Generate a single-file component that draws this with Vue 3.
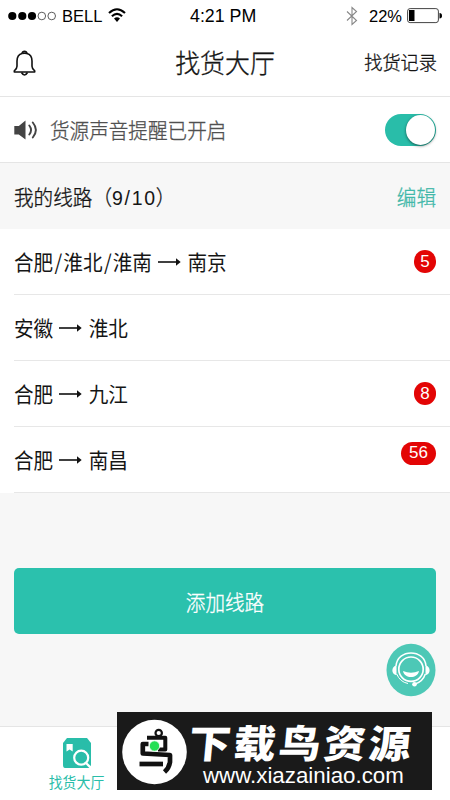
<script setup>
const routes = [
  { from: ['合肥', '淮北', '淮南'], to: '南京', count: 5 },
  { from: ['安徽'], to: '淮北', count: 0 },
  { from: ['合肥'], to: '九江', count: 8 },
  { from: ['合肥'], to: '南昌', count: 56 },
]
</script>

<template>
  <div class="screen">
    <div class="status">
      <svg class="signal" width="49" height="12" viewBox="0 0 49 12">
        <circle cx="4.3" cy="6" r="4.1" /><circle cx="14.3" cy="6" r="4.1" /><circle cx="24" cy="6" r="4.1" />
        <g fill="none" stroke="#333" stroke-width=".8"><circle cx="33.8" cy="6" r="3.8" /><circle cx="43.7" cy="6" r="3.8" /></g>
      </svg>
      <span class="carrier">BELL</span>
      <svg class="wifi" width="18" height="15" viewBox="0 0 18 15" fill="none" stroke="#000" stroke-width="2.1">
        <path d="M1 5.1Q9-2.6 17 5.1M3.9 8.3Q9 3.5 14.1 8.3" /><path d="M6 10.6Q9 8 12 10.6L9 14Z" fill="#000" stroke="none" />
      </svg>
      <span class="time">4:21 PM</span>
      <svg class="bluetooth" width="12" height="20" viewBox="0 0 12 20" fill="none" stroke="#888" stroke-width="1.1"><path d="M1 5.5 10.5 14.5 6 18.5V1.5L10.5 5.5 1 14.5" /></svg>
      <span class="percent">22%</span>
      <svg class="battery" width="35" height="16" viewBox="0 0 35 16"><rect x=".6" y=".6" width="30.8" height="14" rx="2.5" fill="none" stroke="#444" /><path d="M2 2h5.5v11H2z" /><path d="M32.5 5Q35 5 35 7.7T32.5 10.4Z" /></svg>
    </div>

    <header class="nav">
      <svg width="23" height="27" viewBox="0 0 23 27" fill="none" stroke="#111" stroke-width="1.6" stroke-linejoin="round">
        <path d="M9.1 3.4C5.2 4.4 4 7.5 4 11v5.2c0 2.1-.9 3.2-2.7 4.6V22h20.4v-1.2C19.9 19.4 19 18.3 19 16.2V11c0-3.5-1.2-6.6-5.1-7.6" />
        <path d="M9.1 3.5C9 .4 14 .4 13.9 3.5Q11.5 2.7 9.1 3.5M8.5 22.5Q11.5 27.5 14.5 22.5" />
      </svg>
      <h1 class="tall">找货大厅</h1>
      <span class="record tall">找货记录</span>
    </header>

    <section class="sound">
      <svg width="25" height="20" viewBox="0 0 25 20"><path d="M.3 6H4.8L11.5.5V19.5L4.8 14.5H.3Z" fill="#444" /><path d="M15.3 5.5Q18.8 10 15.3 14.5M18.8 2.5Q25 10 18.8 17.5" fill="none" stroke="#444" stroke-width="1.9" stroke-linecap="round" /></svg>
      <span class="sound-label tall">货源声音提醒已开启</span>
      <div class="toggle"><i></i></div>
    </section>

    <section class="heading">
      <span class="tall">我的线路<span>（</span><span class="quota">9/10</span><span class="close">）</span></span>
      <span class="edit tall">编辑</span>
    </section>

    <ul class="routes">
      <li v-for="(r, i) in routes" :key="i">
        <span class="tall"><template v-for="(city, j) in r.from" :key="city"><span v-if="j" class="slash">/</span>{{ city }}</template></span>
        <svg class="arrow" width="23" height="10" viewBox="0 0 23 10"><path d="M0 5H19" stroke="#111" stroke-width="1.6" /><path d="M18 1.2 22.7 5 18 8.8Z" fill="#111" /></svg>
        <span class="tall">{{ r.to }}</span>
        <em v-if="r.count" :class="{ wide: r.count > 9 }"><span>{{ r.count }}</span></em>
      </li>
    </ul>

    <main class="actions"><button><span class="tall">添加线路</span></button></main>

    <nav class="tabs">
      <div class="tab">
        <svg width="28" height="30" viewBox="0 0 28 30">
          <path d="M4 0H24L28 5V27Q28 30 26 30H2Q0 30 0 27V5Z" fill="#29bda9" />
          <path d="M3.5 6H9.7V13.5L6.6 11.5 3.5 13.5Z" fill="#fff" />
          <circle cx="18.2" cy="19.7" r="7" fill="none" stroke="#fff" stroke-width="2.2" /><path d="M23 25 28 30" stroke="#fff" stroke-width="2.3" />
        </svg>
        <span class="tall">找货大厅</span>
      </div>
    </nav>

    <div class="service">
      <svg width="50" height="54" viewBox="0 0 50 54">
        <ellipse cx="25" cy="27" rx="24.5" ry="26.3" fill="#4dc8b6" />
        <g fill="none" stroke="#fff">
          <circle cx="25" cy="26.2" r="12.2" stroke-width="1.7" />
          <path d="M10 23C11.5 5.5 38.5 5.5 40 23M39.3 31Q37 38.5 29 41" stroke-width="1.5" />
          <path d="M10.7 31Q14 39 22 40.5" stroke-width="1" />
        </g>
        <path d="M17 28Q25 31.5 33 28C31.5 36 18.5 36 17 28ZM10.5 22.5V32.2C5 31.5 5 23.3 10.5 22.5ZM39.5 22.5V32.2C45 31.5 45 23.3 39.5 22.5Z" fill="#fff" />
        <circle cx="28.5" cy="41.3" r="2.3" fill="#fff" />
      </svg>
    </div>

    <div class="banner">
      <svg class="bird" width="65" height="66" viewBox="0 0 65 66">
        <circle cx="32.5" cy="33" r="32.3" fill="#fff" />
        <g fill="none" stroke="#111" stroke-linejoin="round">
          <circle cx="36.7" cy="14" r="3.2" stroke-width="2.2" />
          <path d="M25 18.7H43.3V30.5H36" stroke-width="4" />
          <path d="M26.5 25H20.8V34.5L48 36V43Q47 49 42.5 53" stroke-width="4.7" />
          <path d="M17.5 45H41" stroke-width="4.7" />
        </g>
        <circle cx="32.5" cy="27" r="5.2" fill="#25df55" stroke="#fff" stroke-width=".8" />
      </svg>
      <div class="banner-copy"><strong>下载鸟资源</strong><span class="url">www.xiazainiao.com</span></div>
    </div>
  </div>
</template>

<style>
body { margin: 0; overflow: hidden; }
</style>

<style scoped>
* { box-sizing: border-box; }
.screen { position: relative; display: flex; flex-direction: column; width: 450px; height: 800px; overflow: hidden; background: #f7f7f7; color: #151515; font-family: "Noto Sans CJK SC", sans-serif; font-size: 19.6px; font-weight: 300; }
.tall { display: inline-block; white-space: nowrap; transform: scaleY(1.07); padding-bottom: 2px; -webkit-text-stroke: .3px currentColor; }
.status { height: 31px; background: #fff; display: flex; align-items: center; padding: 1px 8px 0; font: 17.5px/28px "Liberation Sans", sans-serif; color: #000; }
.signal { margin-right: 5px; }
.carrier { width: 40px; font-size: 16.5px; }
.wifi { margin-left: 6px; margin-top: -2px; }
.time { margin-left: 64px; width: 68px; white-space: nowrap; font-size: 17.8px; }
.bluetooth { margin-left: 88px; }
.percent { margin-left: 11px; width: 33px; font-size: 16.5px; }
.battery { margin-left: 5px; flex: none; }
.nav { height: 66px; background: #fff; border-bottom: 1px solid #e5e5e5; display: grid; grid-template-columns: 1fr auto 1fr; align-items: center; padding: 0 13px; }
.nav h1 { margin: 0; font-size: 24.9px; line-height: 36px; font-weight: 300; padding-bottom: 6px; }
.record { justify-self: end; font-size: 18.2px; padding-bottom: 4px; }
.sound { height: 66px; background: #fff; border-bottom: 1px solid #e5e5e5; display: flex; align-items: center; padding: 0 14px; }
.sound-label { color: #505050; margin-left: 11px; }
.toggle { margin-left: auto; width: 51px; height: 32px; border-radius: 16px; background: #29bda9; display: flex; justify-content: flex-end; padding: 1px; }
.toggle i { width: 29px; height: 30px; border-radius: 50%; background: #fff; box-shadow: 0 1px 3px #0008; }
.heading { height: 66px; display: flex; align-items: center; justify-content: space-between; padding: 0 14px; }
.quota { font-family: "Liberation Sans", sans-serif; font-size: 19.5px; letter-spacing: 1.7px; -webkit-text-stroke: 0; }
.close { margin-left: -1px; }
.edit { color: #42b8a9; }
.routes { list-style: none; margin: 0; padding: 0 0 0 14px; background: #fff; font-weight: 400; }
.routes .tall { -webkit-text-stroke: 0; }
.routes li { height: 66px; border-bottom: 1px solid #e7e7e7; display: flex; align-items: center; padding-right: 14px; }
.slash { margin: 0 1.1px 0 1.4px; }
.arrow { margin: 0 6.5px 0 6px; }
.routes em { margin-left: auto; width: 22px; height: 23px; border-radius: 12px; background: #e30505; color: #fff; display: flex; align-items: center; justify-content: center; font: 17px "Liberation Sans", sans-serif; }
.routes .wide { width: 35px; margin-bottom: 13px; }
.actions { flex: 1; padding: 75px 14px 0; }
.actions button { width: 100%; height: 66px; border: 0; border-radius: 5px; background: #2bc1ad; color: #fff; font: inherit; padding: 0; display: flex; align-items: center; justify-content: center; }
.tabs { height: 74px; flex: none; background: #fff; border-top: 1px solid #e5e5e5; display: flex; padding-left: 48px; }
.tab { width: 57px; display: flex; flex-direction: column; align-items: center; padding-top: 11px; color: #29bda9; font-size: 13.9px; font-weight: 400; line-height: 20px; }
.tab .tall { margin-top: 4px; padding: 0; -webkit-text-stroke: 0; }
.service { position: absolute; left: 386px; top: 643px; }
.banner { position: absolute; left: 117px; top: 712px; width: 315px; height: 78px; background: #1a1a1a; display: flex; align-items: center; padding-left: 5px; color: #fff; }
.bird { flex: none; margin-top: 2px; }
.banner-copy { display: flex; flex-direction: column; align-items: flex-start; margin-left: 2px; }
.banner strong { font-size: 42px; line-height: 42px; font-weight: 900; letter-spacing: 3px; white-space: nowrap; transform: scaleY(.92) skewX(-5deg); margin-top: 5px; }
.url { font: 22.3px/23px "Liberation Sans", sans-serif; margin-left: 14px; margin-top: 2px; }
</style>
